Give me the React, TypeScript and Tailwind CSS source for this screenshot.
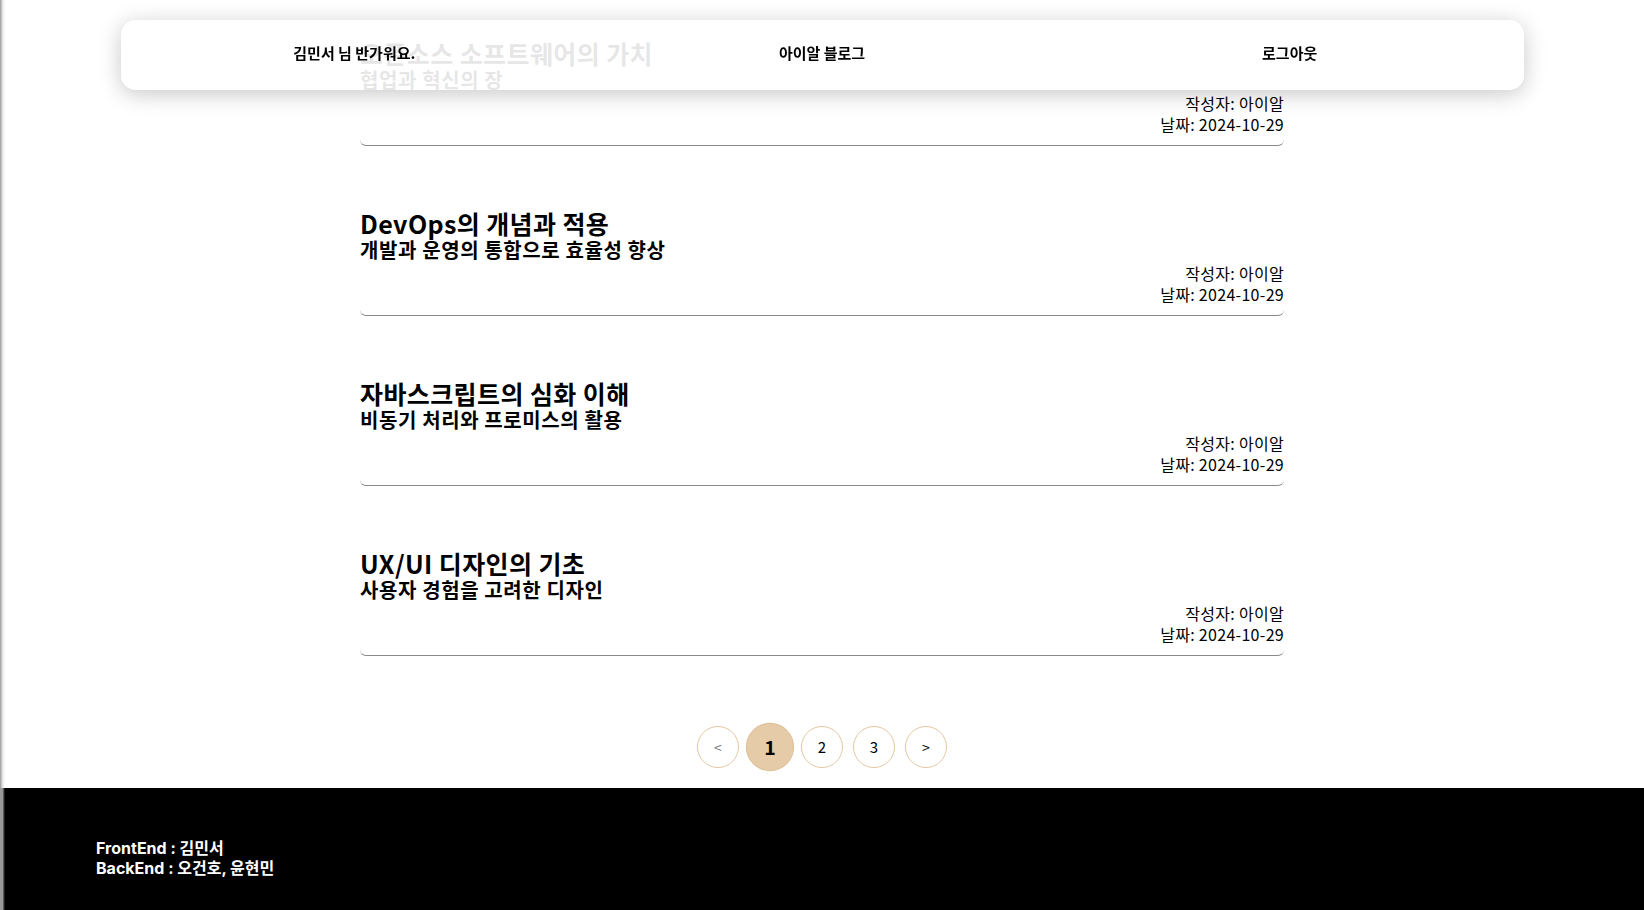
import React from "react";

type Post = { id: number; title: string; subtitle: string; author: string; date: string };

const posts: Post[] = [
  { id: 1, title: "오픈소스 소프트웨어의 가치", subtitle: "협업과 혁신의 장", author: "아이알", date: "2024-10-29" },
  { id: 2, title: "DevOps의 개념과 적용", subtitle: "개발과 운영의 통합으로 효율성 향상", author: "아이알", date: "2024-10-29" },
  { id: 3, title: "자바스크립트의 심화 이해", subtitle: "비동기 처리와 프로미스의 활용", author: "아이알", date: "2024-10-29" },
  { id: 4, title: "UX/UI 디자인의 기초", subtitle: "사용자 경험을 고려한 디자인", author: "아이알", date: "2024-10-29" },
];

const kr = "font-['Noto_Sans_CJK_KR','Noto_Sans',sans-serif]";

function Header() {
  return (
    <header className="fixed top-5 inset-x-0 mx-auto z-10 grid h-[70px] w-[1403px] grid-cols-3 items-center rounded-[15px] bg-white/90 pb-[4px] shadow-[0_4px_22px_rgba(0,0,0,0.22)]">
      <div className="text-center text-[15px] font-bold text-black">김민서 님 반가워요.</div>
      <div className="text-center text-[15px] font-bold text-black">아이알 블로그</div>
      <div className="text-center text-[15px] font-bold text-black">로그아웃</div>
    </header>
  );
}

function PostItem({ post }: { post: Post }) {
  return (
    <article className="rounded-md border-b border-[#8a8a8a] pt-[63px] pb-[10px]">
      <h2 className="text-[25px] leading-[28px] font-bold tracking-[0.4px] text-black">{post.title}</h2>
      <h3 className="text-[20px] leading-[26px] font-semibold tracking-[0.6px] text-black">{post.subtitle}</h3>
      <p className="text-right text-[16px] leading-[21px] tracking-[0.3px] text-black">작성자: {post.author}</p>
      <p className="text-right text-[16px] leading-[21px] tracking-[0.3px] text-black">날짜: {post.date}</p>
    </article>
  );
}

function Pagination() {
  const pages = [1, 2, 3];
  const current = 1;
  return (
    <nav className="mt-[70px] mb-5 flex items-center justify-center gap-[10px]">
      <button className="flex h-[42px] w-[42px] items-center justify-center rounded-full border border-[#e4c7a0] bg-white text-[14px] text-[#777]">
        &lt;
      </button>
      {pages.map(p => (
        <button
          key={p}
          className={
            p === current
              ? "flex h-[42px] w-[42px] scale-[1.15] items-center justify-center rounded-full border border-[#e0c29a] bg-[#e5cba8] text-[17px] font-bold text-black"
              : "flex h-[42px] w-[42px] items-center justify-center rounded-full border border-[#e4c7a0] bg-white text-[15px] text-black"
          }
        >
          {p}
        </button>
      ))}
      <button className="flex h-[42px] w-[42px] items-center justify-center rounded-full border border-[#e4c7a0] bg-white text-[14px] text-black">
        &gt;
      </button>
    </nav>
  );
}

function Footer() {
  return (
    <footer className="bg-black px-[96px] pt-[50px] pb-[70px] font-['Inter','Noto_Sans_CJK_KR',sans-serif] text-[16px] leading-[20px] font-bold text-white">
      <p>FrontEnd : 김민서</p>
      <p>BackEnd : 오건호, 윤현민</p>
    </footer>
  );
}

export default function App() {
  return (
    <div className={`relative min-h-screen overflow-hidden bg-white ${kr}`}>
      <div className="pointer-events-none fixed inset-y-0 left-0 z-20 w-[5px] bg-linear-to-r from-[#9a9a9a] via-[#d6d6d6]/70 to-transparent" />
      <Header />
      <main className="mx-auto -mt-[24px] w-[924px]">
        {posts.map(post => (
          <PostItem key={post.id} post={post} />
        ))}
        <Pagination />
      </main>
      <Footer />
    </div>
  );
}
